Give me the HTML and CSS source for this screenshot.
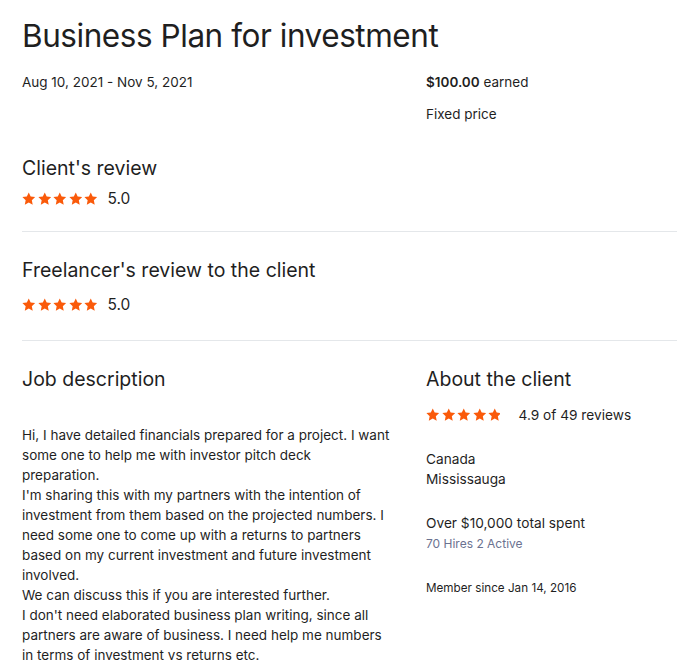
FILE: index.html
```html
<!DOCTYPE html>
<html lang="en">

<head>
  <meta charset="utf-8" />
  <title>Business Plan for investment</title>
  <link rel="stylesheet" href="styles.css">
</head>

<body>
  <svg class="defs" width="0" height="0">
    <defs>
      <path id="star" d="M7 .4l2 4.3 4.6.6-3.4 3.2.9 4.6L7 10.8l-4.1 2.3.9-4.6L.4 5.3 5 4.7z" />
      <clipPath id="part">
        <rect x="0" y="0" width="12.4" height="14" />
      </clipPath>
    </defs>
  </svg>

  <div class="contract">
    <h1 class="contract-title">Business Plan for investment</h1>

    <div class="row">
      <div class="col-main">
        <div class="dates">Aug 10, 2021 - Nov 5, 2021</div>
      </div>
      <div class="col-side">
        <div class="earned"><strong>$100.00</strong> earned</div>
        <div class="price-type">Fixed price</div>
      </div>
    </div>

    <section class="review">
      <h2 class="section-title">Client's review</h2>
      <div class="rating">
        <span class="stars">
          <svg viewBox="0 0 14 14"><use href="#star" /></svg>
          <svg viewBox="0 0 14 14"><use href="#star" /></svg>
          <svg viewBox="0 0 14 14"><use href="#star" /></svg>
          <svg viewBox="0 0 14 14"><use href="#star" /></svg>
          <svg viewBox="0 0 14 14"><use href="#star" /></svg>
        </span>
        <span class="score">5.0</span>
      </div>
    </section>

    <section class="review">
      <h2 class="section-title">Freelancer's review to the client</h2>
      <div class="rating">
        <span class="stars">
          <svg viewBox="0 0 14 14"><use href="#star" /></svg>
          <svg viewBox="0 0 14 14"><use href="#star" /></svg>
          <svg viewBox="0 0 14 14"><use href="#star" /></svg>
          <svg viewBox="0 0 14 14"><use href="#star" /></svg>
          <svg viewBox="0 0 14 14"><use href="#star" /></svg>
        </span>
        <span class="score">5.0</span>
      </div>
    </section>

    <div class="row details">
      <div class="col-main">
        <h2 class="section-title">Job description</h2>
        <p class="description">Hi, I have detailed financials prepared for a project. I want some one to help me with investor pitch deck
preparation.
I'm sharing this with my partners with the intention of investment from them based on the projected numbers. I need some one to come up with a returns to partners based on my current investment and future investment involved.
We can discuss this if you are interested further.
I don't need elaborated business plan writing, since all partners are aware of business. I need help me numbers in terms of investment vs returns etc.</p>
      </div>
      <aside class="col-side">
        <h2 class="section-title">About the client</h2>
        <div class="client-rating">
          <span class="stars">
            <svg viewBox="0 0 14 14"><use href="#star" /></svg>
            <svg viewBox="0 0 14 14"><use href="#star" /></svg>
            <svg viewBox="0 0 14 14"><use href="#star" /></svg>
            <svg viewBox="0 0 14 14"><use href="#star" /></svg>
            <svg viewBox="0 0 14 14"><use href="#star" clip-path="url(#part)" /></svg>
          </span>
          <span class="client-score">4.9 of 49 reviews</span>
        </div>
        <div class="client-block">
          <div>Canada</div>
          <div>Mississauga</div>
        </div>
        <div class="client-block">
          <div>Over $10,000 total spent</div>
          <div class="muted">70 Hires 2 Active</div>
        </div>
        <div class="member-since">Member since Jan 14, 2016</div>
      </aside>
    </div>
  </div>
</body>

</html>
```

FILE: styles.css
```css
:root {
  --text: #1f1f1f;
  --star: #fa5a0a;
  --line: #e4e7ea;
  --muted: #6b7290;
}

html,
body {
  margin: 0;
  background: #fff;
  overflow: hidden;
}

body {
  font-family: Inter, "Liberation Sans", sans-serif;
  color: var(--text);
}

.defs {
  position: absolute;
}

.contract {
  padding: 14px 0 0 22px;
  width: 655px;
}

.contract-title {
  margin: 0;
  font-size: 31.5px;
  font-weight: 400;
  line-height: 44px;
  letter-spacing: -0.45px;
}

.row {
  display: grid;
  grid-template-columns: 370px 1fr;
  column-gap: 34px;
}

.dates,
.earned,
.price-type {
  font-size: 13.5px;
  line-height: 20px;
}

.dates,
.earned {
  margin-top: 14px;
}

.earned strong {
  font-weight: 600;
}

.price-type {
  margin-top: 12px;
}

.review {
  padding: 30px 0 20px;
  border-bottom: 1px solid var(--line);
}

.review + .review {
  padding-top: 24px;
  padding-bottom: 23px;
}

.review + .review .rating {
  margin-top: 9px;
}

.section-title {
  margin: 0;
  font-size: 19.5px;
  font-weight: 400;
  line-height: 28px;
}

.rating {
  display: flex;
  align-items: center;
  margin-top: 5px;
}

.stars {
  display: inline-flex;
  gap: 2px;
  fill: var(--star);
}

.stars svg {
  width: 13.5px;
  height: 13.5px;
}

.score {
  margin-left: 10px;
  font-size: 15.5px;
  line-height: 24px;
}

.details {
  padding-top: 24px;
}

.description {
  margin: 32px 0 0;
  font-size: 13.5px;
  line-height: 20px;
  white-space: pre-line;
}

.client-rating {
  display: flex;
  align-items: center;
  margin-top: 12px;
}

.client-score {
  margin-left: 17px;
  font-size: 13.7px;
  line-height: 20px;
}

.client-block {
  margin-top: 24px;
  font-size: 13.7px;
  line-height: 20px;
}

.muted {
  margin-top: 1px;
  color: var(--muted);
  font-size: 12px;
}

.member-since {
  margin-top: 26px;
  font-size: 11.7px;
  line-height: 16px;
}
```
